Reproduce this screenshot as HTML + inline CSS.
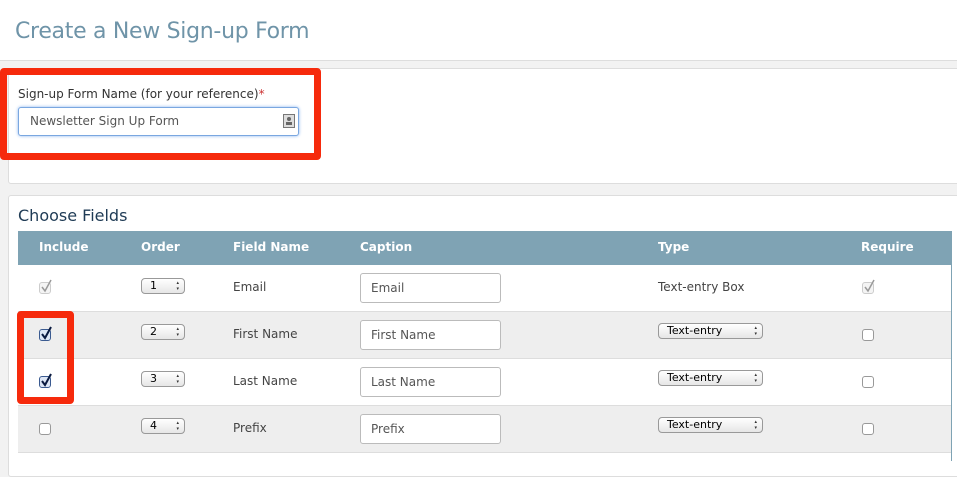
<!DOCTYPE html>
<html><head><style>
body{margin:0;width:957px;height:461px;overflow:hidden;background:#f2f2f2;font-family:"DejaVu Sans","Liberation Sans",sans-serif;position:relative}
.a{position:absolute}
.t{font-size:12px;color:#444}
.sel{position:absolute;height:16px;border:1px solid #999;border-radius:4px;background:linear-gradient(#fff,#e6e6e6);font-size:11px;line-height:14px;color:#000;box-sizing:border-box;padding-left:8px}
.sel:after{content:"\25B4\A\25BE";white-space:pre;position:absolute;right:5px;top:1px;font-size:5px;line-height:6px;color:#333}
.inp{position:absolute;width:141px;height:30px;border:1px solid #bbb;border-radius:3px;background:#fff;box-sizing:border-box;font-size:12px;color:#555;padding-left:10px;line-height:29px}
.cb{position:absolute;width:12px;height:12px;border:1px solid #999;border-radius:3px;background:#fff;box-sizing:border-box}
svg{position:absolute}
</style></head><body>
<div class="a" style="left:0;top:0;width:957px;height:60px;background:#fff;border-bottom:1px solid #ddd"></div>
<div class="a" style="left:15px;top:19px;font-size:22px;color:#6f94a8;letter-spacing:-0.3px">Create a New Sign-up Form</div>
<div class="a" style="left:8px;top:68px;width:960px;height:114px;background:#fff;border:1px solid #ddd;border-radius:3px"></div>
<div class="a" style="left:8px;top:195px;width:960px;height:280px;background:#fff;border:1px solid #ddd;border-radius:3px"></div>
<div class="a t" style="left:18px;top:87px;color:#333">Sign-up Form Name (for your reference)<span style="color:#c33">*</span></div>
<div class="a" style="left:18px;top:107px;width:281px;height:29px;border:1px solid #7aa7e0;box-shadow:0 0 3px #8ab4f0;border-radius:3px;background:#fff;box-sizing:border-box;font-size:12px;color:#555;padding-left:11px;line-height:27px">Newsletter Sign Up Form</div>
<div class="a" style="left:283px;top:114px;width:12px;height:14px;border:1px solid #777;box-sizing:border-box;background:#ddd"><div class="a" style="left:3px;top:2px;width:4px;height:4px;border-radius:2px;background:#666"></div><div class="a" style="left:2px;top:7px;width:6px;height:3px;background:#666"></div></div>
<div class="a" style="left:0;top:68px;width:307px;height:78px;border:7px solid #f62a0c;border-radius:4px"></div>
<div class="a" style="left:18px;top:206px;font-size:16px;color:#1f3b55">Choose Fields</div>
<div class="a" style="left:18px;top:231px;width:933px;height:34px;background:#7fa3b4"></div>
<div class="a" style="left:18px;top:265px;width:933px;height:46px;background:#fff;border-bottom:1px solid #ddd"></div>
<div class="a" style="left:18px;top:312px;width:933px;height:46px;background:#eee;border-bottom:1px solid #ddd"></div>
<div class="a" style="left:18px;top:359px;width:933px;height:46px;background:#fff;border-bottom:1px solid #ddd"></div>
<div class="a" style="left:18px;top:406px;width:933px;height:46px;background:#eee;border-bottom:1px solid #ddd"></div>
<div class="a" style="left:951px;top:231px;width:1px;height:230px;background:#7fa3b4"></div>
<div class="a" style="top:240px;left:0;width:957px;font-size:12px;font-weight:bold;color:#fff">
<span class="a" style="left:39px">Include</span><span class="a" style="left:141px">Order</span><span class="a" style="left:233px">Field Name</span><span class="a" style="left:360px">Caption</span><span class="a" style="left:658px">Type</span><span class="a" style="left:861px">Require</span></div>
<!-- row1 -->
<div class="cb" style="left:39px;top:282px;border-color:#ccc;background:#f4f4f4"></div>
<svg style="left:39px;top:278px" width="14" height="16"><path d="M3 9 L6 13 L12 2" fill="none" stroke="#999" stroke-width="1.5"/></svg>
<div class="sel" style="left:141px;top:278px;width:44px">1</div>
<div class="a t" style="left:233px;top:280px">Email</div>
<div class="inp" style="left:360px;top:273px">Email</div>
<div class="a t" style="left:658px;top:280px">Text-entry Box</div>
<div class="cb" style="left:862px;top:282px;border-color:#ccc;background:#f4f4f4"></div>
<svg style="left:862px;top:278px" width="14" height="16"><path d="M3 9 L6 13 L12 2" fill="none" stroke="#999" stroke-width="1.5"/></svg>
<!-- rows -->
<div class="cb" style="left:39px;top:329px;border-color:#3a5a90;background:#dde6f5"></div>
<svg style="left:39px;top:325px" width="14" height="16"><path d="M3 9 L6 13 L12 2" fill="none" stroke="#0a1a40" stroke-width="2"/></svg>
<div class="sel" style="left:141px;top:324px;width:44px">2</div>
<div class="a t" style="left:233px;top:327px">First Name</div>
<div class="inp" style="left:360px;top:320px">First Name</div>
<div class="sel" style="left:658px;top:323px;width:105px">Text-entry</div>
<div class="cb" style="left:862px;top:329px"></div>
<div class="cb" style="left:39px;top:376px;border-color:#3a5a90;background:#dde6f5"></div>
<svg style="left:39px;top:372px" width="14" height="16"><path d="M3 9 L6 13 L12 2" fill="none" stroke="#0a1a40" stroke-width="2"/></svg>
<div class="sel" style="left:141px;top:371px;width:44px">3</div>
<div class="a t" style="left:233px;top:374px">Last Name</div>
<div class="inp" style="left:360px;top:367px">Last Name</div>
<div class="sel" style="left:658px;top:370px;width:105px">Text-entry</div>
<div class="cb" style="left:862px;top:376px"></div>
<div class="cb" style="left:39px;top:423px"></div>
<div class="sel" style="left:141px;top:418px;width:44px">4</div>
<div class="a t" style="left:233px;top:421px">Prefix</div>
<div class="inp" style="left:360px;top:414px">Prefix</div>
<div class="sel" style="left:658px;top:417px;width:105px">Text-entry</div>
<div class="cb" style="left:862px;top:423px"></div>
<div class="a" style="left:17px;top:311px;width:43px;height:79px;border:7px solid #f62a0c;border-radius:4px"></div>
</body></html>
